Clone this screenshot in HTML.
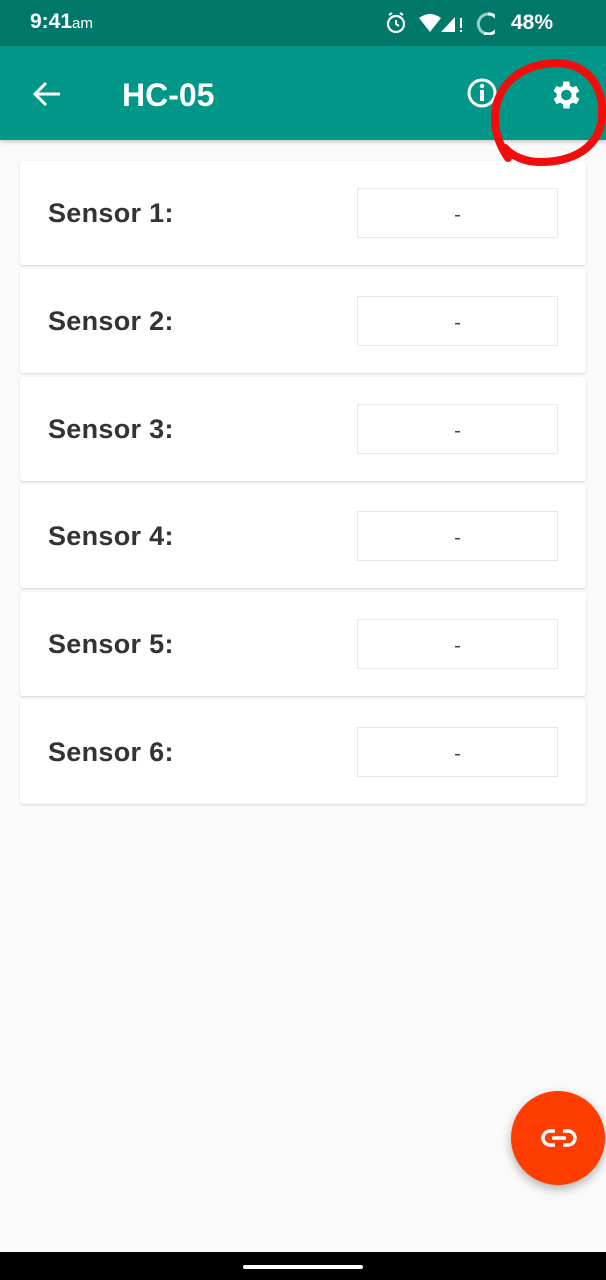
<!DOCTYPE html>
<html><head><style>
body{margin:0;width:606px;height:1280px;background:#fafafa;position:relative;overflow:hidden;font-family:"Liberation Sans",sans-serif}
.sb{position:absolute;left:0;top:0;width:606px;height:46px;background:#00796b;color:#fff}
.ab{position:absolute;left:0;top:46px;width:606px;height:94px;background:#009688;box-shadow:0 2px 4px rgba(0,0,0,.2)}
.card{position:absolute;left:20px;width:566px;height:104px;background:#fff;border-radius:3px;box-shadow:0 1px 2px rgba(0,0,0,.15)}
.card span{position:absolute;left:28px;top:37px;font-size:27px;font-weight:bold;color:#333;letter-spacing:0.3px}
.card div{position:absolute;left:337px;top:27px;width:199px;height:48px;border:1px solid #e8e8e8;text-align:center;line-height:52px;font-size:20px;color:#444}
</style></head><body>
<div class="sb">
<span style="position:absolute;left:30px;top:10px;font-size:21px;font-weight:bold">9:41<span style="font-size:15px;font-weight:normal">am</span></span>
<svg style="position:absolute;left:385px;top:11px" width="110" height="24" viewBox="0 0 110 24">
<circle cx="11" cy="13" r="8" fill="none" stroke="#fff" stroke-width="2.2"/><path d="M11 9v4l3 2M4 4l3-2M18 4l-3-2" stroke="#fff" stroke-width="2" fill="none"/>
<path d="M34 7q11-8 22 0l-11 14z" fill="#fff"/><path d="M70 6v15h-14z" fill="#fff"/><rect x="75" y="7" width="2" height="10" fill="#fff"/><rect x="75" y="19" width="2" height="2" fill="#fff"/>
<path d="M103 3a10 10 0 1 1-4 19" fill="none" stroke="#fff" stroke-width="3"/><path d="M99 22a10 10 0 0 1 4-19" fill="none" stroke="#9cc" stroke-width="3"/>
</svg>
<span style="position:absolute;left:511px;top:11px;font-size:21px;font-weight:bold">48%</span>
</div>
<div class="ab">
<svg style="position:absolute;left:32px;top:34px" width="30" height="28" viewBox="0 0 30 28"><path d="M28 14H4M14 3L3 14l11 11" stroke="#fff" stroke-width="3" fill="none"/></svg>
<span style="position:absolute;left:122px;top:31px;font-size:32px;color:#fff;font-weight:bold">HC-05</span>
<svg style="position:absolute;left:466px;top:31px" width="32" height="32" viewBox="0 0 32 32"><circle cx="16" cy="16" r="13" fill="none" stroke="#fff" stroke-width="3"/><rect x="14" y="13" width="4" height="11" fill="#fff"/><circle cx="16" cy="9" r="2.2" fill="#fff"/></svg>
<svg style="position:absolute;left:547px;top:31px" width="36" height="36" viewBox="0 0 24 24"><path fill="#fff" d="M19.4 13a7.5 7.5 0 0 0 0-2l2.1-1.6-2-3.5-2.5 1a7 7 0 0 0-1.7-1L14.9 3h-4l-.4 2.9a7 7 0 0 0-1.7 1l-2.5-1-2 3.5L6.5 11a7.5 7.5 0 0 0 0 2l-2.1 1.6 2 3.5 2.5-1a7 7 0 0 0 1.7 1l.4 2.9h4l.4-2.9a7 7 0 0 0 1.7-1l2.5 1 2-3.5zM12.9 15.5a3.5 3.5 0 1 1 0-7 3.5 3.5 0 0 1 0 7z"/></svg>
</div>
<div class="card" style="top:161px"><span>Sensor 1:</span><div>-</div></div>
<div class="card" style="top:269px"><span>Sensor 2:</span><div>-</div></div>
<div class="card" style="top:377px"><span>Sensor 3:</span><div>-</div></div>
<div class="card" style="top:484px"><span>Sensor 4:</span><div>-</div></div>
<div class="card" style="top:592px"><span>Sensor 5:</span><div>-</div></div>
<div class="card" style="top:700px"><span>Sensor 6:</span><div>-</div></div>
<svg style="position:absolute;left:0;top:0" width="606" height="200"><path d="M508 158C482 120 495 72 545 64C580 58 604 80 602 115C600 150 570 162 540 162C525 162 512 156 505 148" fill="none" stroke="#f20d0d" stroke-width="8" stroke-linecap="round"/></svg>
<div style="position:absolute;left:511px;top:1091px;width:94px;height:94px;border-radius:50%;background:#ff3d00;box-shadow:0 4px 10px rgba(0,0,0,.3)"></div>
<svg style="position:absolute;left:541px;top:1127px" width="36" height="22" viewBox="0 0 36 22"><path d="M14 4H9a7 7 0 0 0 0 14h5M22 4h5a7 7 0 0 1 0 14h-5M11 11h14" stroke="#fff" stroke-width="3.5" fill="none"/></svg>
<div style="position:absolute;left:0;top:1252px;width:606px;height:28px;background:#000"></div>
<div style="position:absolute;left:243px;top:1265px;width:120px;height:4px;border-radius:2px;background:#fff"></div>
</body></html>
